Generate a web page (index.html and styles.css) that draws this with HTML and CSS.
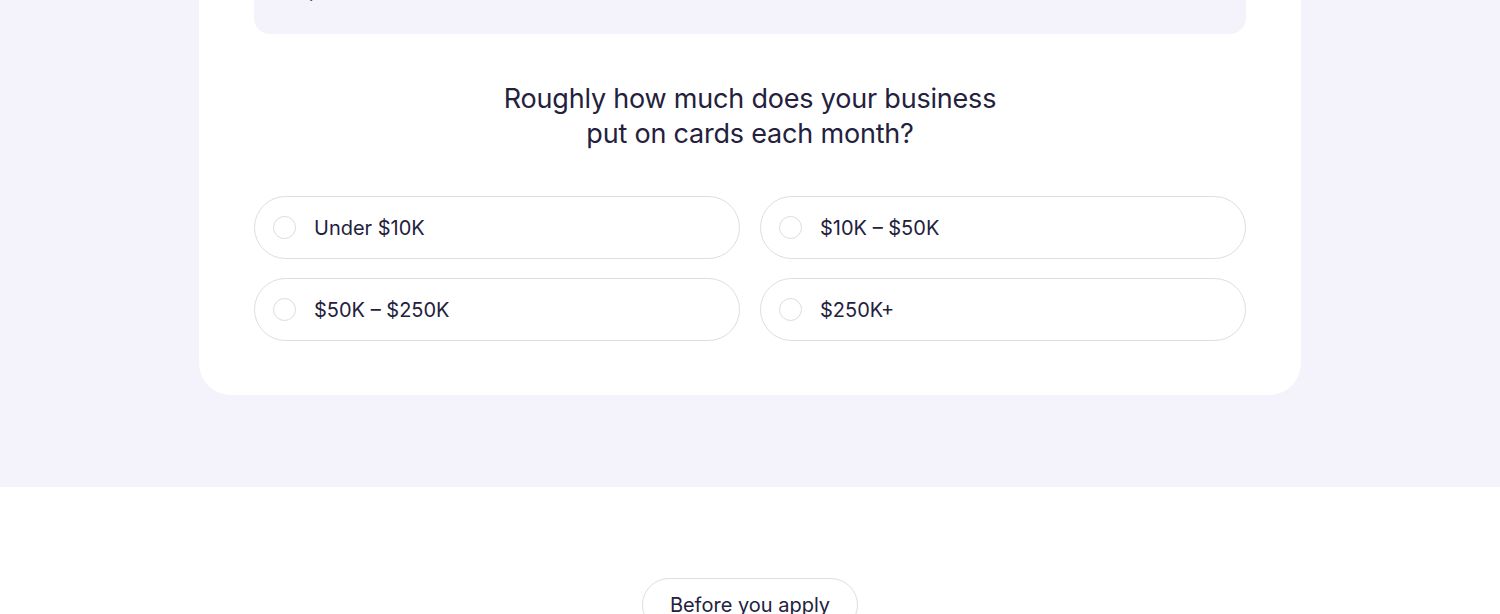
FILE: index.html
```html
<!DOCTYPE html>
<html lang="en">
<head>
    <meta charset="UTF-8">
    <meta name="viewport" content="width=device-width, initial-scale=1.0">
    <title>Card spend</title>
    <link rel="stylesheet" href="styles.css">
</head>
<body>
    <section class="quiz">
        <div class="quiz__card">
            <div class="quiz__note">
                <p>Tell us a little about how your team spends.</p>
                <p>Step two of three</p>
            </div>

            <h2 class="quiz__question">Roughly how much does your business<br>put on cards each month?</h2>

            <form class="options">
                <label class="option">
                    <input type="radio" name="spend" value="1">
                    <span class="option__dot"></span>
                    <span>Under $10K</span>
                </label>
                <label class="option">
                    <input type="radio" name="spend" value="2">
                    <span class="option__dot"></span>
                    <span>$10K – $50K</span>
                </label>
                <label class="option">
                    <input type="radio" name="spend" value="3">
                    <span class="option__dot"></span>
                    <span>$50K – $250K</span>
                </label>
                <label class="option">
                    <input type="radio" name="spend" value="4">
                    <span class="option__dot"></span>
                    <span>$250K+</span>
                </label>
            </form>
        </div>
    </section>

    <section class="apply">
        <span class="apply__tag">Before you apply</span>
    </section>
</body>
</html>
```

FILE: styles.css
```css
* {
    box-sizing: border-box;
    margin: 0px;
    padding: 0px;
}
body {
    font-family: Inter, "Noto Sans", sans-serif;
    color: #23213d;
    background-color: #ffffff;
    overflow: hidden;
}
.quiz {
    background-color: #f4f3fc;
    margin-top: -141px;
    padding: 0px 199px 92px;
}
.quiz__card {
    background-color: #ffffff;
    border-radius: 32px;
    padding: 55px 55px 54px;
}
.quiz__note {
    background-color: #f4f3fc;
    border-radius: 16px;
    padding: 16px 24px 30px;
    height: 120px;
    display: flex;
    flex-direction: column;
    justify-content: flex-end;
    gap: 8px;
    font-size: 20px;
    line-height: 28px;
}
.quiz__question {
    margin: 47px 0px 45px;
    text-align: center;
    font-size: 27px;
    font-weight: 400;
    line-height: 35px;
    letter-spacing: -0.2px;
}
.options {
    display: grid;
    grid-template-columns: 1fr 1fr;
    gap: 19px 20px;
}
.option {
    height: 63px;
    border: 1.5px solid #dedde3;
    border-radius: 32px;
    padding: 0px 18px;
    display: flex;
    align-items: center;
    gap: 18px;
    font-size: 20px;
    cursor: pointer;
}
.option input {
    display: none;
}
.option__dot {
    width: 23px;
    height: 23px;
    border: 1.5px solid #dcdbe0;
    border-radius: 50%;
}
.apply {
    padding-top: 91px;
    display: flex;
    justify-content: center;
}
.apply__tag {
    border: 1.5px solid #dedde3;
    border-radius: 32px;
    padding: 12px 27px;
    font-size: 20px;
    line-height: 28px;
}
```
